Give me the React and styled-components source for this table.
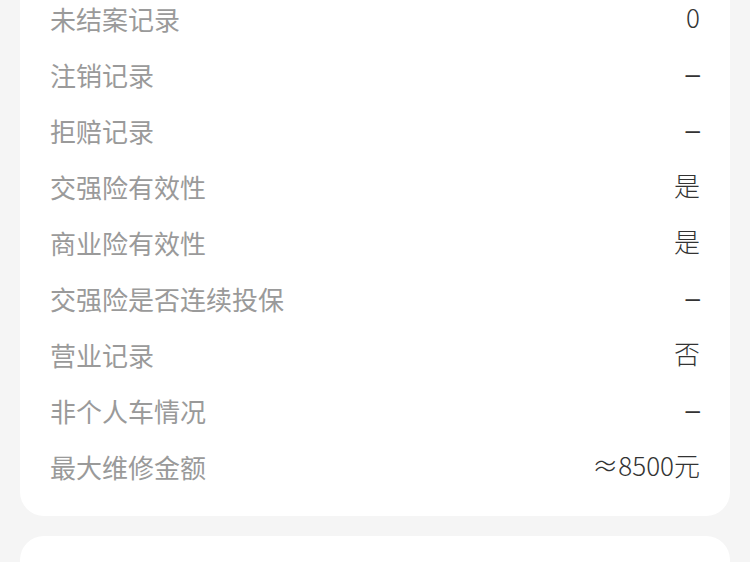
import React from "react";
import styled, { createGlobalStyle } from "styled-components";

const Global = createGlobalStyle`
  html, body { margin: 0; padding: 0; background: #f5f5f5; }
  body { font-family: "Noto Sans CJK SC", "Noto Sans", sans-serif; overflow: hidden; }
`;

const Page = styled.div`
  display: flex;
  flex-direction: column;
  gap: 20px;
  padding: 0 20px;
  margin-top: -30px;
`;

const Card = styled.div`
  background: #fff;
  border-radius: 24px;
  padding: ${(p) => (p.$empty ? "0" : "20px 30px 22px")};
  min-height: ${(p) => (p.$empty ? "120px" : "auto")};
  display: flex;
  flex-direction: column;
`;

const Row = styled.div`
  height: 56px;
  display: flex;
  align-items: center;
  justify-content: space-between;
`;

const Label = styled.span`
  font-size: 26px;
  color: #9a9a9a;
`;

const Value = styled.span`
  font-family: ${(p) =>
    p.$dash ? '"Liberation Sans", sans-serif' : '"Noto Sans CJK SC", sans-serif'};
  font-size: 26px;
  color: #333;
  font-weight: ${(p) => (p.$dash ? 400 : 300)};
  margin-top: ${(p) => (p.$dash ? "0" : "-4px")};
`;

const rows = [
  ["未结案记录", "0"],
  ["注销记录", "–"],
  ["拒赔记录", "–"],
  ["交强险有效性", "是"],
  ["商业险有效性", "是"],
  ["交强险是否连续投保", "–"],
  ["营业记录", "否"],
  ["非个人车情况", "–"],
  ["最大维修金额", "≈8500元"],
];

export default function App() {
  return (
    <>
      <Global />
      <Page>
        <Card>
          {rows.map(([l, v]) => (
            <Row key={l}>
              <Label>{l}</Label>
              <Value $dash={v === "–"}>{v}</Value>
            </Row>
          ))}
        </Card>
        <Card $empty />
      </Page>
    </>
  );
}
